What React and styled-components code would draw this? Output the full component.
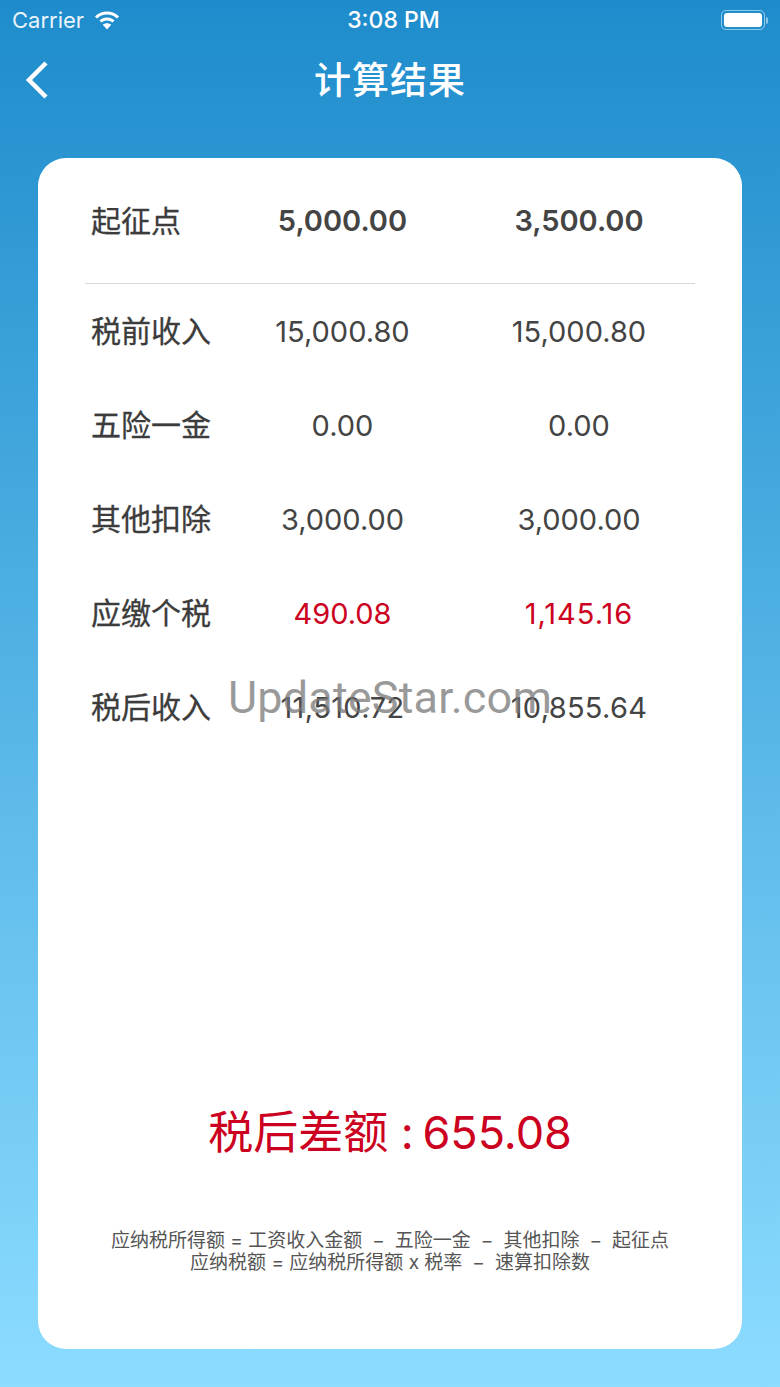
import React from 'react';
import styled, { createGlobalStyle } from 'styled-components';

const GlobalStyle = createGlobalStyle`
  html, body {
    margin: 0;
    padding: 0;
  }
  body {
    font-family: Inter, "Noto Sans CJK SC", sans-serif;
  }
`;

const Screen = styled.div`
  position: relative;
  width: 780px;
  height: 1387px;
  overflow: hidden;
  display: flex;
  flex-direction: column;
  background: linear-gradient(180deg, #1e8ccc 0%, #8cdcff 100%);
`;

const StatusBar = styled.div`
  height: 40px;
  padding: 0 12px;
  display: grid;
  grid-template-columns: 1fr auto 1fr;
  align-items: center;
  color: #fff;
  font-size: 22px;
`;

const Carrier = styled.div`
  display: flex;
  align-items: center;
  gap: 10px;
  color: rgba(255, 255, 255, 0.92);
`;

const Time = styled.div`
  margin-left: 7px;
  font-size: 23px;
  font-weight: 500;
`;

const Battery = styled.div`
  justify-self: end;
  display: flex;
  align-items: center;
  gap: 1px;
`;

const BatteryBody = styled.div`
  width: 44px;
  height: 20px;
  box-sizing: border-box;
  padding: 2px;
  border: 1.5px solid rgba(255, 255, 255, 0.5);
  border-radius: 5px;
`;

const BatteryFill = styled.div`
  height: 100%;
  background: #fff;
  border-radius: 3px;
`;

const BatteryCap = styled.div`
  width: 2px;
  height: 7px;
  background: rgba(255, 255, 255, 0.5);
  border-radius: 0 2px 2px 0;
`;

const NavBar = styled.div`
  height: 80px;
  position: relative;
  display: flex;
  align-items: center;
  justify-content: center;
`;

const BackButton = styled.svg`
  position: absolute;
  left: 24px;
  top: 21px;
`;

const Title = styled.h1`
  margin: 0 0 4px;
  color: #fff;
  font-size: 37px;
  font-weight: 500;
  letter-spacing: 1px;
`;

const Card = styled.div`
  margin: 38px;
  flex: 1;
  background: #fff;
  border-radius: 28px;
  padding: 0 47px;
  display: flex;
  flex-direction: column;
`;

const HeaderRow = styled.div`
  height: 125px;
  padding: 0 0 0 6px;
  display: grid;
  grid-template-columns: 133px 237px 236px;
  align-items: center;
  border-bottom: 1px solid #d8d8d8;
  color: #444;
  font-size: 29px;
  font-weight: 600;
`;

const Rows = styled.div`
  display: flex;
  flex-direction: column;
`;

const Row = styled.div`
  height: 94px;
  padding-left: 6px;
  display: grid;
  grid-template-columns: 133px 237px 236px;
  align-items: center;
  font-size: 29px;
  color: #444;
`;

const Label = styled.div`
  margin-bottom: 4px;
  font-size: 30px;
  font-weight: 400;
  white-space: nowrap;
  color: #3c3c3c;
  -webkit-text-stroke: 0.3px #3c3c3c;
`;

const Value = styled.div`
  text-align: center;
  letter-spacing: ${(p) => p.$spread || 0}px;
  color: ${(p) => (p.$red ? '#cc0020' : 'inherit')};
`;

const Footer = styled.div`
  margin-top: auto;
  padding-bottom: 75px;
  display: flex;
  flex-direction: column;
  align-items: center;
`;

const Difference = styled.div`
  color: #cc0020;
  font-size: 45px;
  line-height: 56px;
  margin-bottom: 69px;
  white-space: nowrap;
`;

const Amount = styled.span`
  margin-left: -4px;
`;

const Formula = styled.div`
  color: #555;
  font-size: 19px;
  line-height: 22px;
  text-align: center;
  white-space: nowrap;
`;

const Dash = styled.span`
  margin: 0 10px;
`;

const Watermark = styled.div`
  position: absolute;
  left: 228px;
  top: 670px;
  color: rgba(120, 120, 120, 0.75);
  font-family: Roboto, sans-serif;
  font-size: 45px;
  letter-spacing: 0.15px;
  line-height: 56px;
  white-space: nowrap;
`;

const rows = [
  { label: '税前收入', a: '15,000.80', b: '15,000.80' },
  { label: '五险一金', a: '0.00', b: '0.00' },
  { label: '其他扣除', a: '3,000.00', b: '3,000.00' },
  { label: '应缴个税', a: '490.08', b: '1,145.16', red: true, spreadB: 1 },
  { label: '税后收入', a: '11,510.72', b: '10,855.64', spreadA: 0.4, spreadB: 0.3 },
];

const Wifi = () => (
  <svg width="26" height="20" viewBox="0 0 26 20" fill="none" stroke="#fff" strokeWidth="3">
    <path d="M2 7.5 C8 1.5 18 1.5 24 7.5" />
    <path d="M6.5 11.5 C10 8 16 8 19.5 11.5" />
    <path d="M13 19.5 L8.8 14.8 C11 12.8 15 12.8 17.2 14.8 Z" fill="#fff" stroke="none" />
  </svg>
);

export default function App() {
  return (
    <Screen>
      <GlobalStyle />
      <StatusBar>
        <Carrier>
          Carrier
          <Wifi />
        </Carrier>
        <Time>3:08 PM</Time>
        <Battery>
          <BatteryBody>
            <BatteryFill />
          </BatteryBody>
          <BatteryCap />
        </Battery>
      </StatusBar>
      <NavBar>
        <BackButton width="26" height="38" viewBox="0 0 26 38" fill="none" stroke="#fff" strokeWidth="4.5">
          <path d="M22 2 L5 19 L22 36" />
        </BackButton>
        <Title>计算结果</Title>
      </NavBar>
      <Card>
        <HeaderRow>
          <Label>起征点</Label>
          <Value>5,000.00</Value>
          <Value>3,500.00</Value>
        </HeaderRow>
        <Rows>
          {rows.map((r) => (
            <Row key={r.label}>
              <Label>{r.label}</Label>
              <Value $red={r.red} $spread={r.spreadA}>{r.a}</Value>
              <Value $red={r.red} $spread={r.spreadB}>{r.b}</Value>
            </Row>
          ))}
        </Rows>
        <Footer>
          <Difference>
            税后差额 : <Amount>655.08</Amount>
          </Difference>
          <Formula>
            应纳税所得额 = 工资收入金额<Dash>−</Dash>五险一金<Dash>−</Dash>其他扣除<Dash>−</Dash>起征点
          </Formula>
          <Formula>
            应纳税额 = 应纳税所得额 x 税率<Dash>−</Dash>速算扣除数
          </Formula>
        </Footer>
      </Card>
      <Watermark>UpdateStar.com</Watermark>
    </Screen>
  );
}
